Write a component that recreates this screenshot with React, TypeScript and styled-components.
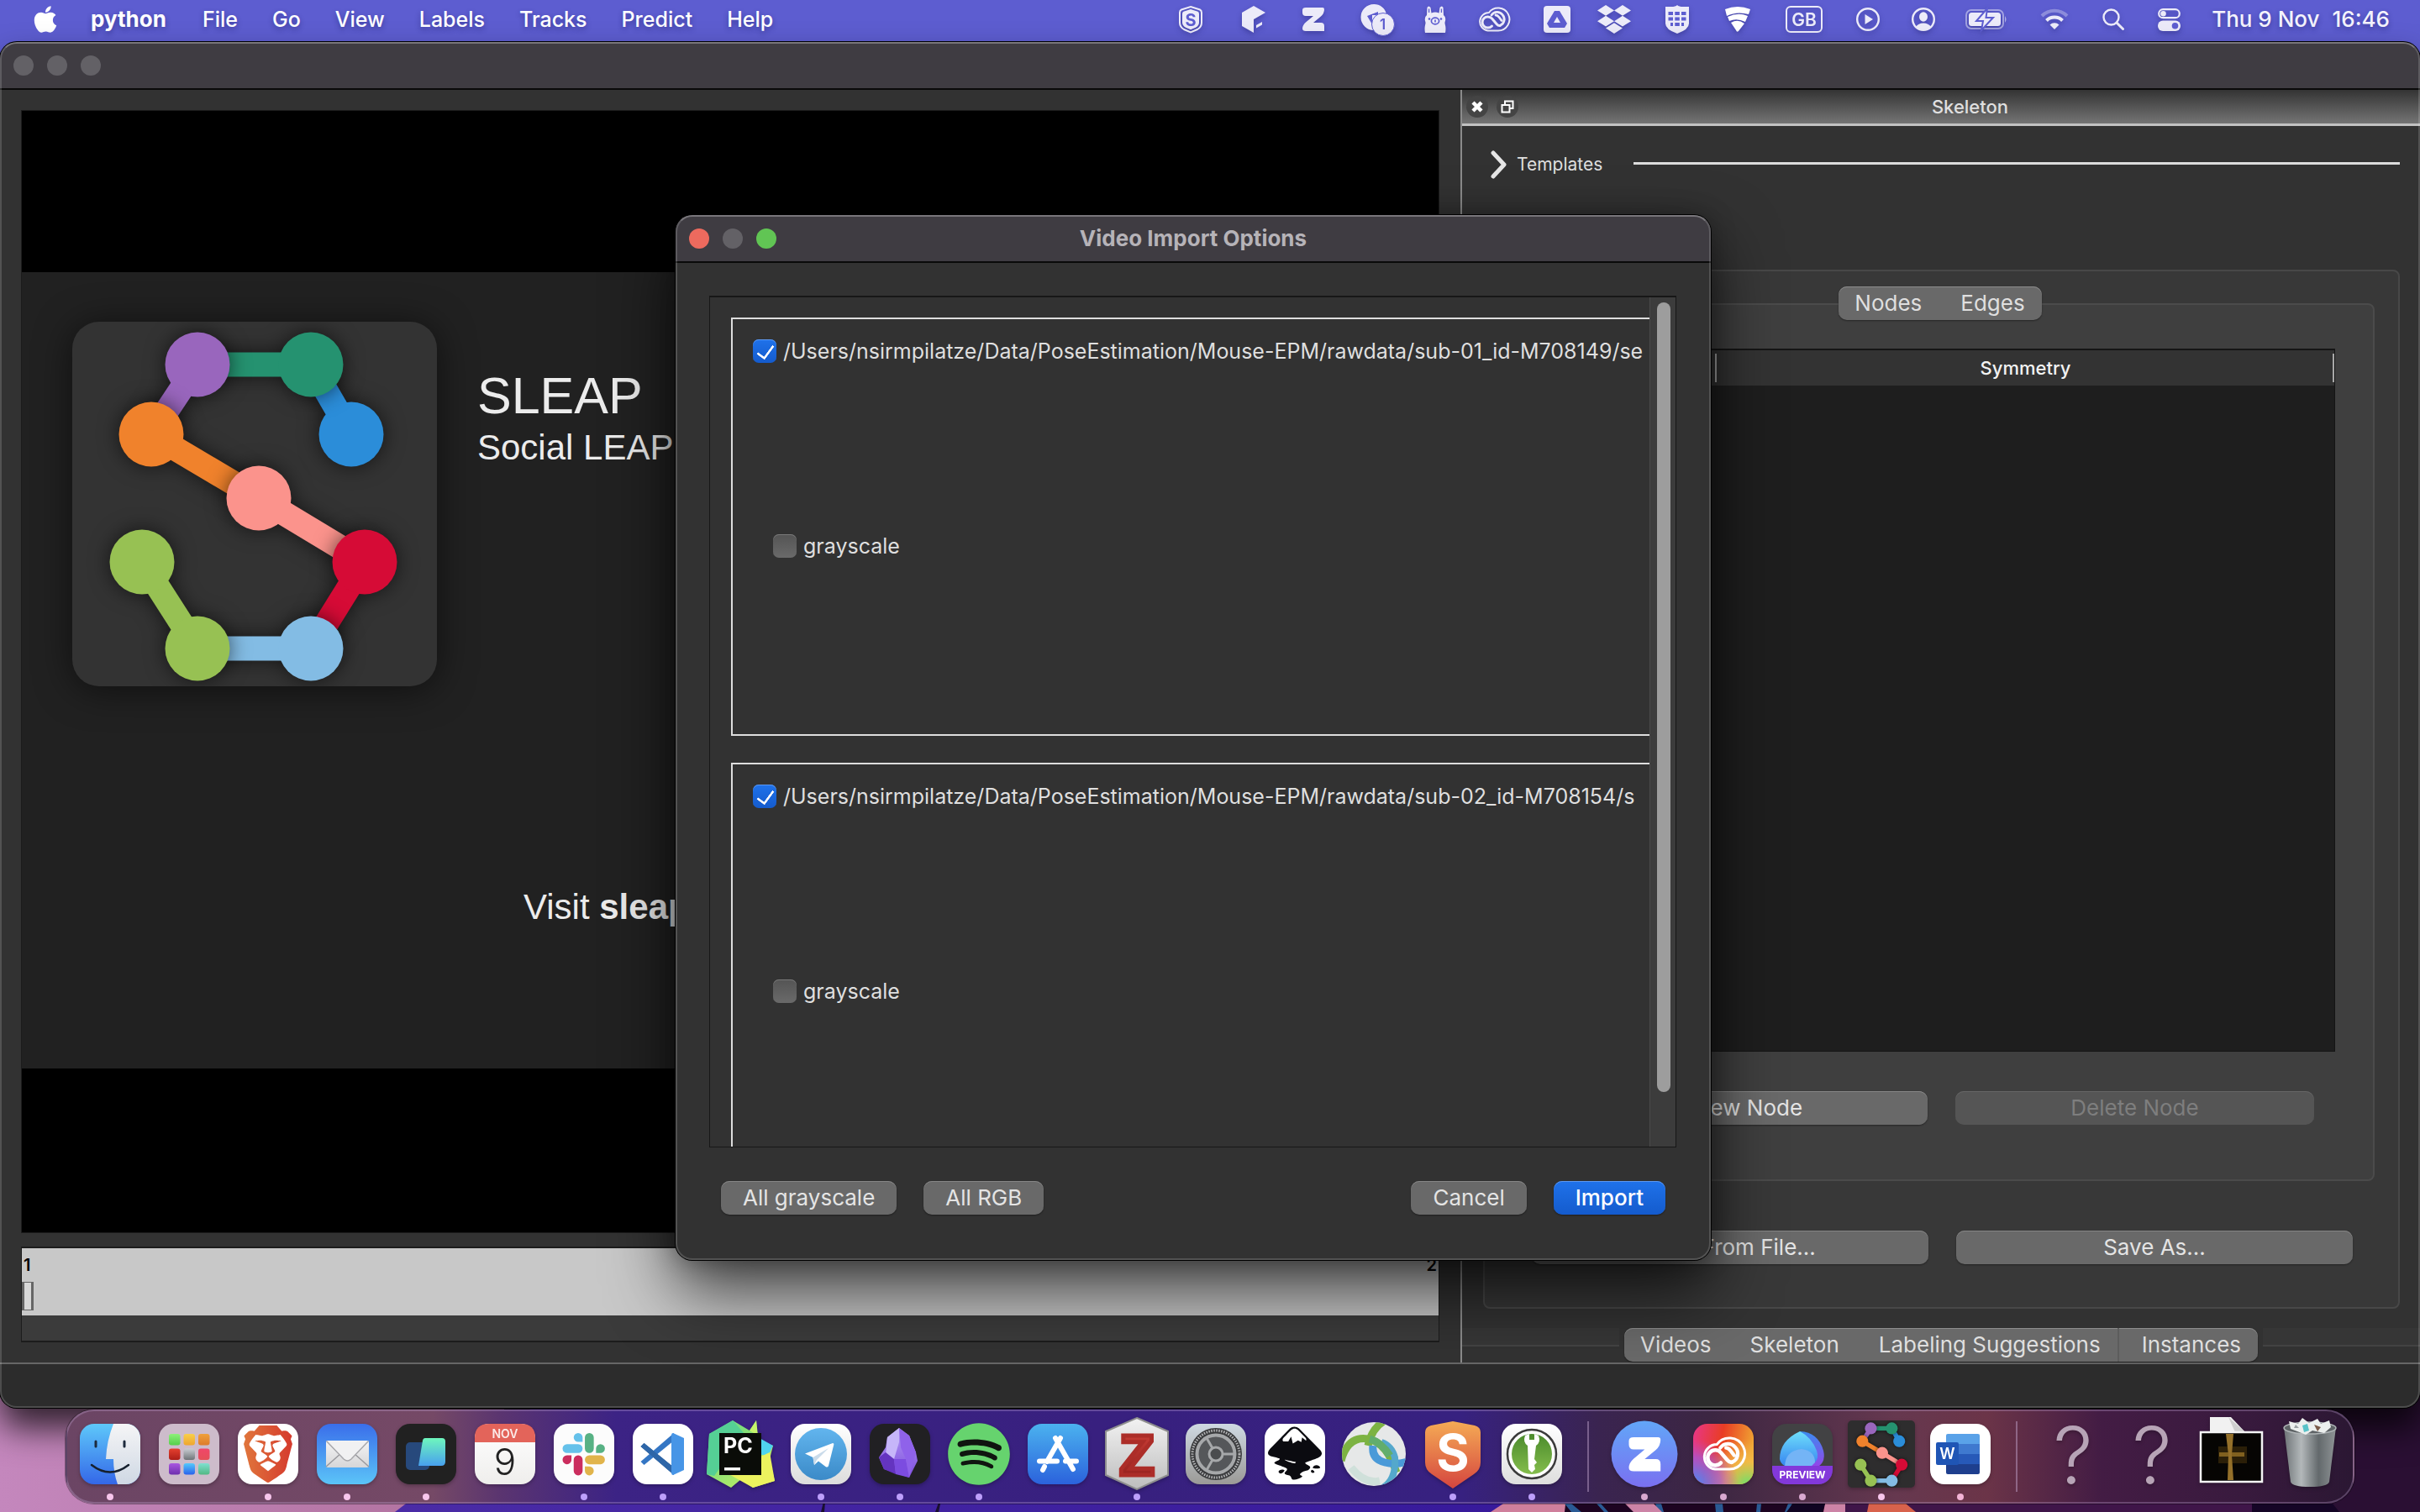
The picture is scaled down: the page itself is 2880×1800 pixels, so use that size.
import React from "react";
import styled, { createGlobalStyle, css } from "styled-components";
import { FaApple, FaDropbox, FaSpotify } from "react-icons/fa";
import { SiBrave, SiInkscape } from "react-icons/si";

const UI = `Inter, "Liberation Sans", sans-serif`;
const HELV = `"Liberation Sans", Arial, sans-serif`;

const GlobalStyle = createGlobalStyle`
  * { box-sizing: border-box; }
  html, body { margin: 0; height: 100%; }
  body { font-family: ${UI}; font-size: 25px; line-height: 32px; color: #dfdfdf; background: #5d5dd0; overflow: hidden; }
  button, input { font: inherit; color: inherit; margin: 0; }
  button { border: 0; padding: 0; background: none; }
`;

/* ---------- Desktop ---------- */

const Desktop = styled.div`
  position: relative;
  display: flex;
  flex-direction: column;
  height: 100vh;
  overflow: hidden;
  isolation: isolate;
`;

const WallpaperSvg = styled.svg`
  position: absolute;
  left: 0;
  bottom: 0;
  width: 100%;
  height: 160px;
  z-index: -1;
`;

const Wallpaper = () => (
  <WallpaperSvg viewBox="0 0 2880 160" preserveAspectRatio="none" aria-hidden="true">
    <defs>
      <linearGradient id="wpPink" x1="0" y1="0" x2="1" y2="0">
        <stop offset="0" stopColor="#c487bd" />
        <stop offset="1" stopColor="#b0709c" />
      </linearGradient>
      <linearGradient id="wpBlue" x1="0" y1="0" x2="1" y2="0">
        <stop offset="0" stopColor="#4a2ba6" />
        <stop offset="1" stopColor="#36189a" />
      </linearGradient>
    </defs>
    <rect width="2880" height="160" fill="#2a0f33" />
    <rect width="600" height="160" fill="url(#wpPink)" />
    <path d="M470 160 L680 0 H1880 V160Z" fill="url(#wpBlue)" />
    <path d="M977 160 l3-12 h2 l-1 12z M1113 160 l5-14 h2 l-3 14z" fill="#1a1030" />
    <path d="M1774 160 L1850 110 L1870 160Z" fill="#cf7f9c" />
    <path d="M1880 0 H2200 V160 H1862Z" fill="#1d0421" />
    <path d="M1862 150 l8 0 l12 10 h-12z M1900 150 h5 l9 10 h-5z M1970 150 h7 l3 10 h-7z M2041 150 h9 l1 10 h-9z M2091 150 h5 l-1 10 h-5z M2128 150 h5 l-6 10 h-3z" fill="#2a5a94" />
    <path d="M1934 150 h34 l10 10 h-34z M2172 150 h32 l-8 10 h-26z" fill="#cc83a6" />
    <path d="M2134 150 h38 l-4 10 h-42z" fill="#100422" />
    <rect x="2196" y="0" width="500" height="160" fill="#3f1549" />
    <path d="M2224 150 h44 l12 10 h-58z" fill="#d8624c" />
    <path d="M2680 150 h96 l8 10 h-104z" fill="#150526" />
  </WallpaperSvg>
);

/* ---------- Menu bar ---------- */

const MenuBar = styled.header`
  display: flex;
  align-items: center;
  justify-content: space-between;
  height: 50px;
  flex: none;
  padding: 0 36px 4px;
  color: #f4f3fc;
  text-shadow: 0 3px 6px rgba(20, 20, 90, 0.45);
`;

const Menus = styled.nav`
  display: flex;
  align-items: center;
  gap: 41px;
`;

const AppleButton = styled.button`
  display: flex;
  margin-right: -5px;
  color: #fff;
`;

const MenuButton = styled.button<{ $bold?: boolean }>`
  color: #fff;
  text-shadow: inherit;
  font-size: ${(p) => (p.$bold ? 26 : 25)}px;
  font-weight: ${(p) => (p.$bold ? 700 : 500)};
  padding-right: ${(p) => (p.$bold ? 2 : 0)}px;
`;

const StatusItems = styled.div`
  display: flex;
  align-items: center;
`;

const StatusButton = styled.button<{ $w: number }>`
  display: flex;
  align-items: center;
  justify-content: center;
  width: ${(p) => p.$w}px;
  height: 40px;
  svg { filter: drop-shadow(0 3px 3px rgba(20, 20, 90, 0.35)); overflow: visible; }
`;

const Clock = styled.time`
  display: flex;
  gap: 15px;
  padding-left: 14px;
  font-size: 26px;
  font-weight: 500;
`;

const W = "#ecebf9";
const B = "#5d5dd0";

const CloudLoops = ({ color, stroke }: { color: string; stroke: number }) => (
  <g fill="none" stroke={color} strokeWidth={stroke} strokeLinecap="round">
    <path d="M12.500 28.500 H25 A13.500 13.500 0 1 0 14 7 A10.800 10.800 0 0 0 12.500 28.500Z" />
    <path d="M17.500 23 A6.600 6.600 0 1 1 17.500 14 L23 20.500 Q25 22.800 27 22.500" strokeWidth={stroke * 1.5} />
    <path d="M17 10 A8 8 0 0 1 30 9.500 A8 8 0 0 1 27 22.500 M22 10 Q24 10 26 12.500 L29 16.500" strokeWidth={stroke * 1.4} />
  </g>
);

const ZoomMark = ({ color }: { color: string }) => (
  <path
    fill={color}
    d="M4 0 H24 Q26 0 26 2 Q26 7 22 10.500 L13 18 H22 Q26 18 26 22 V28 H4 Q0 28 0 25 Q0 21 4 17.500 L13 10 H4 Q0 10 0 6 V3 Q0 0 4 0Z"
  />
);

const statusIcons: { name: string; w: number; art: React.ReactNode }[] = [
  {
    name: "Surfshark", w: 74,
    art: (
      <svg width="28" height="32" viewBox="0 0 28 32">
        <path d="M14 1 L25 4.500 Q27 5.500 27 8 V20 Q27 25 22 28 L14 31.500 L6 28 Q1 25 1 20 V8 Q1 5.500 3 4.500Z" fill="none" stroke={W} strokeWidth="2" />
        <path d="M14 4 L22.500 6.800 Q24 7.500 24 9.500 V19.500 Q24 23.500 20 25.800 L14 28.300 L8 25.800 Q4 23.500 4 19.500 V9.500 Q4 7.500 5.500 6.800Z" fill={W} />
        <text x="14" y="23.500" textAnchor="middle" fontFamily={UI} fontWeight="700" fontSize="20" fill={B}>S</text>
      </svg>
    ),
  },
  {
    name: "Cube", w: 76,
    art: (
      <svg width="28" height="32" viewBox="0 0 28 32">
        <path d="M14 0 L28 8 L14 16 V32 L0 24 V8Z M17 23 L24 19 V22.500 L17 26.500Z" fill={W} />
      </svg>
    ),
  },
  { name: "Zoom", w: 66, art: <svg width="26" height="28" viewBox="0 0 26 28"><ZoomMark color={W} /></svg> },
  {
    name: "Notifications", w: 86,
    art: (
      <svg width="40" height="36" viewBox="0 0 40 36">
        <path d="M16 0 A15 15 0 1 0 16 31 A15 15 0 0 0 31 12 A15 15 0 0 0 16 0Z" fill={W} />
        <path d="M8 14 L21 9 V13 L14 13 V24Z" fill={B} />
        <circle cx="27" cy="24" r="13.500" fill={W} stroke={B} strokeWidth="1" />
        <text x="26.500" y="30" textAnchor="middle" fontFamily={UI} fontWeight="600" fontSize="17" fill={B}>1</text>
      </svg>
    ),
  },
  {
    name: "Ollama", w: 52,
    art: (
      <svg width="26" height="32" viewBox="0 0 26 32">
        <path d="M3 11 L3.500 2 Q5 -1 7.500 2 L8.500 8.500 Q13 6.500 17.500 8.500 L18.500 2 Q21 -1 22.500 2 L23 11 Q26 13 25 18 Q24 20 25 23 Q26 27 25 32 H1 Q0 27 1 23 Q2 20 1 18 Q0 13 3 11Z" fill={W} />
        <path d="M5.600 3.500 v4.500 M20.400 3.500 v4.500" stroke={B} strokeWidth="1.300" />
        <ellipse cx="13" cy="18" rx="4.600" ry="3.800" fill="none" stroke={B} strokeWidth="1.700" />
        <circle cx="6" cy="15.500" r="1.300" fill={B} /><circle cx="20" cy="15.500" r="1.300" fill={B} />
        <path d="M13 16.500 v3" stroke={B} strokeWidth="1.600" />
      </svg>
    ),
  },
  { name: "Creative Cloud", w: 88, art: <svg width="40" height="30" viewBox="0 0 40 30"><CloudLoops color={W} stroke={2} /></svg> },
  {
    name: "Adguard", w: 62,
    art: (
      <svg width="32" height="32" viewBox="0 0 32 32">
        <rect width="32" height="32" rx="4" fill={W} />
        <path d="M13 6 H19 L28 21 L25 26 H7 L4 21Z" fill={B} />
        <path d="M16 13 L20 20 H12Z" fill={W} />
      </svg>
    ),
  },
  { name: "Dropbox", w: 74, art: <FaDropbox size={40} color={W} /> },
  {
    name: "Firewall", w: 76,
    art: (
      <svg width="30" height="34" viewBox="0 0 30 34">
        <path d="M1 2 H8 Q13 2 15 0 Q17 2 22 2 H29 V22 Q29 29 15 34 Q1 29 1 22Z" fill={W} />
        <path d="M4.500 8 h5.500 v4 h-5.500z M12.300 8 h5.500 v4 h-5.500z M20 8 h5.500 v4 h-5.500z M4.500 14.500 h5.500 v4 h-5.500z M12.300 14.500 h5.500 v4 h-5.500z M20 14.500 h5.500 v4 h-5.500z M7 21 h3 v4 h-3z M12.300 21 h5.500 v4 h-5.500z M20 21 h3 v4 h-3z" fill={B} />
      </svg>
    ),
  },
  {
    name: "FortiClient", w: 68,
    art: (
      <svg width="30" height="30" viewBox="0 0 30 30">
        <path d="M0 3 Q15 -3 30 3 L28 9 Q14 5 2 11Z M3 12 Q16 6 27 11 L24 18 Q14 13 5 17Z M7 19 Q15 14 23 20 L16 29 Q14 31 13 28Z" fill="#fff" />
      </svg>
    ),
  },
  {
    name: "Input source", w: 90,
    art: (
      <svg width="44" height="32" viewBox="0 0 44 32">
        <rect x="1" y="1" width="42" height="30" rx="5" fill="none" stroke={W} strokeWidth="2" />
        <text x="22" y="23.500" textAnchor="middle" fontFamily={UI} fontWeight="600" fontSize="21" fill={W}>GB</text>
      </svg>
    ),
  },
  {
    name: "Now playing", w: 62,
    art: (
      <svg width="28" height="28" viewBox="0 0 28 28">
        <circle cx="14" cy="14" r="12.800" fill="none" stroke={W} strokeWidth="2.400" />
        <path d="M10.500 8 L20 14 L10.500 20Z" fill={W} strokeLinejoin="round" />
      </svg>
    ),
  },
  {
    name: "User", w: 70,
    art: (
      <svg width="28" height="28" viewBox="0 0 28 28">
        <circle cx="14" cy="14" r="12.800" fill="none" stroke={W} strokeWidth="2.400" />
        <ellipse cx="14" cy="11" rx="5" ry="5.800" fill={W} />
        <path d="M5 23 Q8 18.500 14 18.500 Q20 18.500 23 23 Q19 27 14 27 Q9 27 5 23Z" fill={W} />
      </svg>
    ),
  },
  {
    name: "Battery", w: 80,
    art: (
      <svg width="50" height="26" viewBox="0 0 50 26">
        <rect x="1" y="2" width="44" height="22" rx="6" fill="none" stroke={W} strokeOpacity="0.500" strokeWidth="2" />
        <rect x="4" y="5" width="38" height="16" rx="3.500" fill={W} />
        <path d="M47 9 Q50 13 47 17Z" fill={W} fillOpacity="0.600" />
        <path d="M26 0 L13 15 H21 L19 26 L33 11 H24.500Z" fill={W} stroke={B} strokeWidth="2" />
      </svg>
    ),
  },
  {
    name: "Wi-Fi", w: 82,
    art: (
      <svg width="34" height="26" viewBox="0 0 34 26">
        <g fill="none" stroke={W} strokeWidth="4">
          <path d="M2 9 A21 21 0 0 1 32 9" strokeOpacity="0.350" />
          <path d="M7.500 14.500 A13.500 13.500 0 0 1 26.500 14.500" />
        </g>
        <path d="M17 25 L11.500 19.500 A8 8 0 0 1 22.500 19.500Z" fill={W} />
      </svg>
    ),
  },
  {
    name: "Spotlight", w: 58,
    art: (
      <svg width="26" height="26" viewBox="0 0 26 26">
        <circle cx="10.500" cy="10.500" r="9" fill="none" stroke={W} strokeWidth="2.400" />
        <path d="M17 17 L24.500 24.500" stroke={W} strokeWidth="3" strokeLinecap="round" />
      </svg>
    ),
  },
  {
    name: "Control Centre", w: 74,
    art: (
      <svg width="27" height="27" viewBox="0 0 27 27">
        <rect x="1.200" y="1.200" width="24.600" height="10" rx="5" fill="none" stroke={W} strokeWidth="2.200" />
        <circle cx="6.500" cy="6.200" r="3.300" fill={W} />
        <rect x="0" y="14.500" width="27" height="12.500" rx="6" fill={W} />
        <circle cx="20.500" cy="20.700" r="3.800" fill={B} />
      </svg>
    ),
  },
];

/* ---------- Window chrome ---------- */

const frame = css`
  border-radius: 20px;
  overflow: hidden;
  background: #323232;
  &::after {
    content: "";
    position: absolute;
    inset: 0;
    border-radius: 20px;
    border: 2px solid rgba(255, 255, 255, 0.16);
    border-top-color: rgba(255, 255, 255, 0.3);
    pointer-events: none;
  }
`;

const MainWindow = styled.main`
  ${frame}
  position: relative;
  display: flex;
  flex-direction: column;
  flex: 1;
  min-height: 0;
  box-shadow: 0 0 0 1px #000, 0 24px 40px rgba(0, 0, 0, 0.75);
`;

const TitleBar = styled.div`
  display: grid;
  grid-template-columns: 1fr auto 1fr;
  align-items: center;
  height: 57px;
  flex: none;
  padding: 0 16px;
  background: #3f3c42;
  border-bottom: 2px solid #0a0a0a;
  h1 { margin: 0; font-size: 26px; line-height: 32px; font-weight: 700; color: #b6b3b8; }
`;

const Lights = styled.div`
  display: flex;
  gap: 16px;
`;

const Light = styled.button<{ $color: string }>`
  width: 24px;
  height: 24px;
  border-radius: 50%;
  background: ${(p) => p.$color};
`;

const WindowBody = styled.div`
  display: grid;
  grid-template-columns: minmax(0, 1738fr) minmax(0, 1142fr);
  flex: 1;
  min-height: 0;
`;

const StatusBar = styled.footer`
  height: 54px;
  flex: none;
  border-top: 2px solid #666;
  background: #2c2c2c;
`;

/* ---------- Video side ---------- */

const VideoSide = styled.section`
  display: flex;
  flex-direction: column;
  gap: 16px;
  padding: 24px 25px;
  min-height: 0;
`;

const VideoView = styled.div`
  display: flex;
  flex-direction: column;
  justify-content: center;
  flex: 1;
  min-height: 0;
  padding-bottom: 3px;
  background: #000;
  border: 1px solid #1c1c1c;
`;

const Splash = styled.div`
  aspect-ratio: 16 / 9;
  padding: 59px 60px;
  background: #212121;
  font-family: ${HELV};
  color: #ececec;
  white-space: nowrap;
  overflow: hidden;
`;

const SplashTop = styled.div`
  display: flex;
  gap: 48px;
`;

const LogoCard = styled.div`
  width: 434px;
  height: 434px;
  border-radius: 32px;
  background: #333;
  box-shadow: 0 4px 44px rgba(0, 0, 0, 0.55);
`;

const SplashText = styled.div`
  padding-top: 56px;
  h2 { margin: 0 0 6px; font-size: 61px; line-height: 64px; font-weight: 400; }
  p { margin: 0; font-size: 42px; line-height: 48px; }
`;

const Visit = styled.p`
  margin: 239px 0 0;
  padding-left: 537px;
  font-size: 42px;
  line-height: 48px;
`;

type Pt = [number, number];
const chain: { color: string; node: Pt; to: Pt; end?: Pt }[] = [
  { color: "#2b8dd9", node: [332, 134], to: [284, 51] },
  { color: "#259270", node: [284, 51], to: [149, 51] },
  { color: "#9966bd", node: [149, 51], to: [94, 134] },
  { color: "#f0822c", node: [94, 134], to: [222, 210] },
  { color: "#fb938c", node: [222, 210], to: [348, 286] },
  { color: "#d60b36", node: [348, 286], to: [284, 389] },
  { color: "#83bce4", node: [284, 389], to: [149, 389] },
  { color: "#97c153", node: [149, 389], to: [83, 286], end: [83, 286] },
];

const Link = styled.g`
  filter: drop-shadow(0 0 12px rgba(0, 0, 0, 0.6));
`;

const SleapMark = (props: React.SVGProps<SVGSVGElement>) => (
  <svg viewBox="0 0 434 434" {...props}>
    {chain.map((c) => (
      <Link key={c.color}>
        <path d={`M${c.node} L${c.to}`} stroke={c.color} strokeWidth="29" />
        <circle cx={c.node[0]} cy={c.node[1]} r="38.500" fill={c.color} />
        {c.end && <circle cx={c.end[0]} cy={c.end[1]} r="38.500" fill={c.color} />}
      </Link>
    ))}
  </svg>
);

const Timeline = styled.div`
  flex: none;
  height: 114px;
  border: 1px solid #1c1c1c;
  border-top-width: 2px;
  border-bottom-width: 2px;
  background: #3b3b3b;
`;

const Track = styled.div`
  display: flex;
  flex-direction: column;
  gap: 8px;
  height: 80px;
  padding-top: 8px;
  background: #c8c8c8;
  color: #000;
`;

const FrameNumbers = styled.div`
  display: flex;
  justify-content: space-between;
  padding: 0 2px;
  font-size: 20px;
  line-height: 24px;
  font-weight: 600;
`;

const FrameSlider = styled.input`
  appearance: none;
  display: block;
  width: 100%;
  height: 34px;
  background: transparent;
  &::-webkit-slider-thumb {
    appearance: none;
    width: 14px;
    height: 34px;
    border: 3px solid #666;
    border-top-width: 1px;
    border-bottom-width: 1px;
    background: #d8d8d8;
  }
`;

/* ---------- Skeleton panel ---------- */

const Panel = styled.aside`
  display: flex;
  flex-direction: column;
  min-height: 0;
  border-left: 2px solid #8b8b8b;
`;

const PanelHeader = styled.div`
  display: grid;
  grid-template-columns: 70px 1fr;
  align-items: center;
  flex: none;
  height: 43px;
  padding-left: 5px;
  border-bottom: 3px solid #c2c2c2;
  background: linear-gradient(#343434, #747474);
  h2 { margin: 0 0 0 -6px; font-size: 22px; line-height: 28px; font-weight: 500; text-align: center; }
`;

const HeaderButtons = styled.div`
  display: flex;
  gap: 10px;
`;

const RoundButton = styled.button`
  display: flex;
  align-items: center;
  justify-content: center;
  width: 26px;
  height: 26px;
  border-radius: 50%;
  background: #444;
`;

const PanelContent = styled.div`
  display: flex;
  flex-direction: column;
  flex: 1;
  min-height: 0;
  padding: 29px 24px 23px 25px;
`;

const Templates = styled.div`
  display: flex;
  align-items: center;
  flex: none;
  margin-bottom: 108px;
  hr { flex: 1; height: 3px; margin: 0 0 4px; border: 0; background: #dcdcdc; }
`;

const Disclosure = styled.button`
  display: flex;
  align-items: center;
  gap: 11px;
  width: 179px;
  padding-left: 9px;
  font-size: 21px;
  line-height: 34px;
`;

const OuterGroup = styled.div`
  display: flex;
  flex-direction: column;
  flex: 1;
  min-height: 0;
  padding: 18px 28px 51px 25px;
  border: 2px solid #484848;
  border-radius: 8px;
  background: #383838;
`;

const Segments = styled.div`
  position: relative;
  display: flex;
  flex: none;
  height: 40px;
  border-radius: 10px;
  background: #696969;
  box-shadow: inset 0 1px 0 #8d8d8d, 0 1px 2px rgba(0, 0, 0, 0.4);
  font-size: 26px;
`;

const NodeSegments = styled(Segments)`
  align-self: center;
  margin-bottom: -20px;
  z-index: 1;
`;

const Segment = styled.button<{ $divided?: boolean }>`
  padding: 0 19px;
  & + & { padding: 0 20px 0 27px; }
  border-left: ${(p) => (p.$divided ? "2px solid #5c5c5c" : "0")};
`;

const InnerGroup = styled.div`
  display: flex;
  flex-direction: column;
  flex: 1;
  min-height: 0;
  padding: 52px 45px 65px;
  border: 2px solid #4b4b4b;
  border-radius: 8px;
  background: #3f3f3f;
`;

const TableFrame = styled.div`
  flex: 1;
  min-height: 0;
  border: 1px solid #151515;
  border-top-width: 2px;
  background: #1e1e1e;
`;

const NodeTable = styled.table`
  width: 100%;
  border-collapse: collapse;
  th {
    position: relative;
    height: 42px;
    padding: 0;
    background: #333;
    font-size: 22px;
    line-height: 28px;
    font-weight: 500;
    color: #f2f2f2;
  }
  th:first-child { width: 203px; }
  th::after {
    content: "";
    position: absolute;
    right: 0;
    top: 4px;
    bottom: 4px;
    width: 2px;
    background: #a8a8a8;
  }
`;

const ButtonRow = styled.div<{ $top: number; $left: number; $right: number }>`
  display: flex;
  gap: 33px;
  flex: none;
  padding: ${(p) => `${p.$top}px ${p.$right}px 0 ${p.$left}px`};
  button { flex: 1; }
`;

const PushButton = styled.button<{ $primary?: boolean }>`
  height: 40px;
  padding: 0 26px;
  border-radius: 10px;
  background: ${(p) => (p.$primary ? "linear-gradient(#1f72ea, #145bcd)" : "#696969")};
  color: ${(p) => (p.$primary ? "#fff" : "#e4e4e4")};
  box-shadow: inset 0 1px 0 ${(p) => (p.$primary ? "#5d98f0" : "#868686")}, 0 1px 2px rgba(0, 0, 0, 0.4);
  font-size: 26px;
  font-weight: ${(p) => (p.$primary ? 500 : 400)};
  &:disabled { background: #555; color: #7e7e7e; box-shadow: inset 0 1px 0 #666; }
`;

const BottomTabs = styled.div`
  display: flex;
  gap: 6px;
  flex: none;
  height: 41px;
`;

const TabEdge = styled.div`
  flex: 1;
  height: 22px;
  background: #363636;
  border-bottom: 2px solid #434343;
`;

/* ---------- Import dialog ---------- */

const Dialog = styled.section`
  ${frame}
  position: absolute;
  left: 804px;
  top: 256px;
  width: 1232px;
  z-index: 5;
  overflow: visible;
  box-shadow: 0 0 0 1px #000, 0 36px 80px rgba(0, 0, 0, 0.7), 0 0 30px rgba(0, 0, 0, 0.3);
  ${TitleBar} { border-radius: 20px 20px 0 0; }
`;

const DialogBody = styled.div`
  padding: 39px 41px 54px 40px;
`;

const ScrollArea = styled.div`
  display: flex;
  height: 1014px;
  border: 1px solid #171717;
  border-top-width: 2px;
`;

const ScrollContent = styled.div`
  flex: 1;
  min-width: 0;
  padding: 24px 0 0 25px;
  overflow: hidden;
`;

const ScrollTrack = styled.div`
  width: 31px;
  padding: 6px 6px 6px 8px;
  background: #3c3c3c;
  border-left: 1px solid #4a4a4a;
`;

const ScrollThumb = styled.div`
  height: 940px;
  border-radius: 8px;
  background: #9d9d9d;
`;

const VideoGroup = styled.fieldset`
  display: flex;
  flex-direction: column;
  width: calc(100% + 60px);
  min-width: 0;
  height: 498px;
  margin: 0 0 32px;
  padding: 24px 24px 6px;
  border: 2px solid #dedede;
`;

const CheckLabel = styled.label`
  display: flex;
  align-items: center;
  gap: 8px;
  height: 28px;
  white-space: nowrap;
`;

const GrayRow = styled.div`
  display: flex;
  align-items: center;
  flex: 1;
  padding-left: 24px;
`;

const Check = styled.input`
  appearance: none;
  position: relative;
  flex: none;
  width: 28px;
  height: 28px;
  border-radius: 7px;
  background: linear-gradient(#545454, #6a6a6a);
  box-shadow: inset 0 1px 0 #7a7a7a;
  &:checked { background: linear-gradient(#1f72ea, #145bcd); box-shadow: inset 0 1px 0 #5d98f0; }
  &:checked::after {
    content: "";
    position: absolute;
    left: 9px;
    top: 3px;
    width: 9px;
    height: 17px;
    border: solid #fff;
    border-width: 0 3px 3px 0;
    border-radius: 1px;
    transform: rotate(36deg);
  }
`;

const DialogButtons = styled.div`
  display: flex;
  gap: 32px;
  padding: 40px 13px 0 14px;
  & > :nth-child(3) { margin-left: auto; }
`;

/* ---------- Dock ---------- */

const DockArea = styled.div`
  position: relative;
  display: flex;
  justify-content: center;
  flex: none;
  padding: 2px 0 10px;
`;

const DockShelf = styled.nav`
  display: flex;
  height: 112px;
  padding: 7px 4px 0;
  border: 2px solid rgba(200, 170, 220, 0.3);
  border-radius: 34px;
  background: linear-gradient(90deg, #6b4564 0%, #754966 16%, #5a3470 19%, #3c2385 24%, #38207f 45%, #372180 61%, #3a2450 67%, #3c2642 72%, #66384f 80%, #6b3448 84%, #431c44 89%, #391a3e 95%, #2b1733 100%);
  box-shadow: 0 0 0 1px rgba(0, 0, 0, 0.35);
`;

const DockButton = styled.button<{ $dot?: string }>`
  display: flex;
  flex-direction: column;
  align-items: center;
  gap: 3px;
  width: 94px;
  &::after {
    content: "";
    width: 8px;
    height: 8px;
    border-radius: 50%;
    background: ${(p) => p.$dot ?? "transparent"};
  }
  & > svg { display: block; overflow: visible; filter: drop-shadow(0 2px 2px rgba(0, 0, 0, 0.25)); }
`;

const DockRule = styled.span`
  width: 2px;
  height: 84px;
  margin: 5px 19px 0 19px;
  background: rgba(200, 170, 210, 0.45);
`;

const Tile = ({ fill }: { fill: string }) => <rect x="11" y="8" width="72" height="72" rx="17" fill={fill} />;

const Grad = ({ id, stops, x2 = 0, y2 = 1 }: { id: string; stops: string[]; x2?: number; y2?: number }) => (
  <linearGradient id={id} x1="0" y1="0" x2={x2} y2={y2}>
    {stops.map((s, i) => <stop key={i} offset={i / (stops.length - 1)} stopColor={s} />)}
  </linearGradient>
);

const padColors = [
  ["#8df07a", "#56cf4b"], ["#f8cf4a", "#efa52f"], ["#efa03a", "#dd7c2c"],
  ["#e5402f", "#ad1e18"], ["#c9cdd2", "#6f7478"], ["#f0476a", "#e55058"],
  ["#a957e0", "#6e2fae"], ["#55c9fb", "#2a62ec"], ["#7fe0d0", "#52b884"],
];

type DockItem = { name: string; dot?: string; art: React.ReactNode };
const PINK = "#f7c6ec";
const LILAC = "#bd9ffb";
const ROSE = "#d9a8d0";

const apps: DockItem[] = [
  {
    name: "Finder", dot: PINK,
    art: (
      <>
        <defs><Grad id="fA" stops={["#5ec8fa", "#3467e8"]} /><Grad id="fB" stops={["#f5f5f6", "#cfd8e4"]} /><clipPath id="fC"><rect x="11" y="8" width="72" height="72" rx="17" /></clipPath></defs>
        <g clipPath="url(#fC)">
          <rect x="11" y="8" width="72" height="72" fill="url(#fA)" />
          <path d="M51 8 Q43 28 42 50 H51 Q51 66 56 80 H83 V8Z" fill="url(#fB)" />
        </g>
        <path d="M30 29 v6 M64 29 v6" stroke="#1d2a3c" strokeWidth="3" strokeLinecap="round" />
        <path d="M25 57 Q47 74 69 57" fill="none" stroke="#16202e" strokeWidth="2.500" strokeLinecap="round" />
      </>
    ),
  },
  {
    name: "Launchpad",
    art: (
      <>
        <defs>{padColors.map((c, i) => <Grad key={i} id={`lp${i}`} stops={c} />)}</defs>
        <Tile fill="#cdbccb" />
        {padColors.map((_, i) => (
          <rect key={i} x={23 + (i % 3) * 17.500} y={20 + Math.floor(i / 3) * 17.500} width="13.500" height="13.500" rx="3" fill={`url(#lp${i})`} />
        ))}
      </>
    ),
  },
  {
    name: "Brave", dot: PINK,
    art: (
      <>
        <defs><Grad id="brG" stops={["#e0763c", "#d53a2d"]} x2={1} y2={0} /></defs>
        <Tile fill="#fff" />
        <SiBrave x="13" y="10" size={68} style={{ fill: "url(#brG)" }} />
      </>
    ),
  },
  {
    name: "Mail", dot: PINK,
    art: (
      <>
        <defs><Grad id="mA" stops={["#3a6eea", "#5bc4f8"]} /><Grad id="mB" stops={["#f4f4f4", "#d6d6d8"]} /></defs>
        <Tile fill="url(#mA)" />
        <rect x="22" y="28" width="51" height="32" rx="2" fill="url(#mB)" />
        <path d="M22 59 L40 43 M73 59 L55 43" stroke="#9a9a9e" strokeWidth="1.500" />
        <path d="M22.500 28.500 L43 50 Q47.500 54 52 50 L72.500 28.500" fill="#f1f1f2" stroke="#a8a8ac" strokeWidth="1.500" />
      </>
    ),
  },
  {
    name: "Warp", dot: PINK,
    art: (
      <>
        <defs><Grad id="wA" stops={["#6ef7bd", "#48a0ee"]} /></defs>
        <Tile fill="#212121" />
        <rect x="23" y="30" width="28" height="33" rx="5" fill="#27497c" />
        <path d="M46 25 H66 Q70 25 70 29 V53 Q70 58 65 58 H38 L43 28 Q43.500 25 46 25Z" fill="url(#wA)" />
      </>
    ),
  },
  {
    name: "Calendar",
    art: (
      <>
        <defs><Grad id="cA" stops={["#fff", "#efeeec"]} /></defs>
        <Tile fill="url(#cA)" />
        <path d="M11 30 V25 Q11 8 28 8 H66 Q83 8 83 25 V30Z" fill="#e3645a" />
        <text x="47" y="24.500" textAnchor="middle" fontFamily={UI} fontWeight="600" fontSize="14" fill="#fbe9e7">NOV</text>
        <text x="47" y="69" textAnchor="middle" fontFamily={UI} fontWeight="300" fontSize="44" fill="#222">9</text>
      </>
    ),
  },
  {
    name: "Slack", dot: LILAC,
    art: (
      <>
        <Tile fill="#fcfcfc" />
        <g transform="translate(21.500 19) scale(2.100)">
          <path fill="#cb2d5e" d="M5.042 15.165a2.528 2.528 0 0 1-2.520 2.523A2.528 2.528 0 0 1 0 15.165a2.527 2.527 0 0 1 2.522-2.520h2.520v2.520zM6.313 15.165a2.527 2.527 0 0 1 2.521-2.520 2.527 2.527 0 0 1 2.521 2.520v6.313A2.528 2.528 0 0 1 8.834 24a2.528 2.528 0 0 1-2.521-2.522v-6.313z" />
          <path fill="#65c1ea" d="M8.834 5.042a2.528 2.528 0 0 1-2.521-2.520A2.528 2.528 0 0 1 8.834 0a2.528 2.528 0 0 1 2.521 2.522v2.520H8.834zM8.834 6.313a2.528 2.528 0 0 1 2.521 2.521 2.528 2.528 0 0 1-2.521 2.521H2.522A2.528 2.528 0 0 1 0 8.834a2.528 2.528 0 0 1 2.522-2.521h6.312z" />
          <path fill="#57b184" d="M18.956 8.834a2.528 2.528 0 0 1 2.522-2.521A2.528 2.528 0 0 1 24 8.834a2.528 2.528 0 0 1-2.522 2.521h-2.522V8.834zM17.688 8.834a2.528 2.528 0 0 1-2.523 2.521 2.527 2.527 0 0 1-2.520-2.521V2.522A2.527 2.527 0 0 1 15.165 0a2.528 2.528 0 0 1 2.523 2.522v6.312z" />
          <path fill="#e1b44b" d="M15.165 18.956a2.528 2.528 0 0 1 2.523 2.522A2.528 2.528 0 0 1 15.165 24a2.527 2.527 0 0 1-2.520-2.522v-2.522h2.520zM15.165 17.688a2.527 2.527 0 0 1-2.520-2.523 2.526 2.526 0 0 1 2.520-2.520h6.313A2.527 2.527 0 0 1 24 15.165a2.528 2.528 0 0 1-2.522 2.523h-6.313z" />
        </g>
      </>
    ),
  },
  {
    name: "Visual Studio Code", dot: LILAC,
    art: (
      <>
        <Tile fill="#fff" />
        <path d="M20.500 35 L24.500 31 L60 60 V69Z" fill="#2a5f9e" />
        <path d="M20.500 53 L24.500 57 L60 28 V19Z" fill="#3476c4" />
        <path d="M20.500 35 L24.500 31 L60 60 L59 68Z" fill="#2e66a8" />
        <path d="M59 19 L72 25 V63 L59 69 Q57 69 57 66 V22 Q57 19 59 19Z" fill="#4795e6" />
      </>
    ),
  },
  {
    name: "PyCharm",
    art: (
      <>
        <defs><Grad id="pA" stops={["#57d58a", "#d4f25a"]} x2={1} /></defs>
        <path d="M8 20 L36 4 L56 16 L64 4 L66 30 L84 34 L80 50 L86 76 L60 84 L46 74 L34 84 L5 68Z" fill="url(#pA)" />
        <path d="M8 20 L36 4 L50 20 L14 70 L5 68Z" fill="#55cf95" />
        <path d="M66 24 L84 34 L78 46 L66 44Z" fill="#4fd4ee" />
        <path d="M28 66 L80 42 L86 76 L60 84Z" fill="#ecf25e" />
        <path d="M56 16 L64 4 L66 22Z" fill="#c5f36a" />
        <rect x="20" y="19" width="50" height="50" fill="#0a0c08" />
        <text x="25" y="43" fontFamily={UI} fontWeight="700" fontSize="25" fill="#fff">PC</text>
        <rect x="26" y="60" width="19" height="3.500" fill="#fff" />
      </>
    ),
  },
  {
    name: "Telegram", dot: LILAC,
    art: (
      <>
        <defs><Grad id="tA" stops={["#62b5ee", "#3b8ac8"]} /><Grad id="tB" stops={["#fff", "#dcdcdc"]} /></defs>
        <Tile fill="url(#tB)" />
        <circle cx="47" cy="44" r="31" fill="url(#tA)" />
        <path d="M28 43.500 L61 31 Q63 31 62 34 L56 58 Q55 60.500 52.500 59 L44 52.500 L39 57 L37.500 48Z" fill="#fff" />
        <path d="M37.500 48 L56 37 L42 51 L39 57Z" fill="#c9dbea" />
      </>
    ),
  },
  {
    name: "Obsidian", dot: LILAC,
    art: (
      <>
        <defs><Grad id="oA" stops={["#b49af5", "#7d4ddd"]} /></defs>
        <Tile fill="#212023" />
        <path d="M46 13 L58 22 L66 42 L68 52 L58 72 L46 68 L28 62 L22 48 L30 36 L32 24Z" fill="url(#oA)" />
        <path d="M46 13 L32 24 L30 45 L40 50 L46 30Z" fill="#c6b6f9" />
        <path d="M22 48 L30 42 L40 50 L42 68 L28 62Z" fill="#6434c0" />
        <path d="M40 50 L54 50 L58 72 L42 68Z" fill="#7c4ce0" />
        <path d="M46 13 L58 22 L66 42 L58 72 L54 50 L48 36Z" fill="#8f62ea" />
      </>
    ),
  },
  {
    name: "Spotify", dot: LILAC,
    art: (
      <>
        <circle cx="47" cy="44" r="34" fill="#101510" />
        <FaSpotify x="9" y="6" size={76} color="#66d36e" />
      </>
    ),
  },
  {
    name: "App Store",
    art: (
      <>
        <defs><Grad id="aA" stops={["#4bb2ef", "#2b62dc"]} /></defs>
        <Tile fill="url(#aA)" />
        <g stroke="#fff" strokeWidth="6" strokeLinecap="round">
          <path d="M50 25 L34 53 M44 25 L65 62 M25 52.500 H46 M56 52.500 H69 M31 59 L29 63" />
        </g>
      </>
    ),
  },
  {
    name: "Zotero", dot: LILAC,
    art: (
      <>
        <defs><Grad id="zA" stops={["#f2f2f2", "#bdbdbd"]} /><Grad id="zB" stops={["#d0423a", "#8d1c1a"]} /></defs>
        <path d="M47 1 L84 17 V69 L47 86 L10 69 V17Z" fill="url(#zA)" stroke="#8e8e8e" strokeWidth="2" />
        <text x="47" y="69" textAnchor="middle" fontFamily={HELV} fontWeight="700" fontSize="68" fill="url(#zB)" stroke="#ac2d28" strokeWidth="5">Z</text>
      </>
    ),
  },
  {
    name: "System Settings",
    art: (
      <>
        <defs><Grad id="sA" stops={["#cfd9e2", "#9b9a97"]} /></defs>
        <Tile fill="url(#sA)" />
        <circle cx="47" cy="44" r="31" fill="#3a3b3d" />
        <circle cx="47" cy="44" r="28" fill="none" stroke="#b5b6b8" strokeWidth="3" strokeDasharray="1.500 1.500" />
        <circle cx="47" cy="44" r="22.500" fill="#55575a" stroke="#a6a8aa" strokeWidth="4" />
        <path d="M47 44 H70 M47 44 L36 25 M47 44 L36 63" stroke="#a6a8aa" strokeWidth="3" />
        <circle cx="47" cy="44" r="8" fill="#4a4c4e" stroke="#a6a8aa" strokeWidth="3" />
      </>
    ),
  },
  {
    name: "Inkscape",
    art: (
      <>
        <Tile fill="#fff" />
        <SiInkscape x="15" y="11" size={64} color="#0b0b10" />
      </>
    ),
  },
  {
    name: "Cytoscape",
    art: (
      <>
        <defs><clipPath id="cyC"><circle cx="47" cy="44" r="38" /></clipPath></defs>
        <circle cx="47" cy="44" r="38" fill="#e6e8e8" />
        <g clipPath="url(#cyC)" fill="none">
          <path d="M20 60 Q36 80 54 76" stroke="#cfe0da" strokeWidth="9" />
          <path d="M8 52 Q16 22 40 26 Q62 30 74 66" stroke="#7cb342" strokeWidth="9" />
          <path d="M40 34 Q44 14 60 4" stroke="#7cb342" strokeWidth="9" />
          <path d="M46 34 Q44 50 60 54 Q74 58 90 52" stroke="#4a9ad8" strokeWidth="9" />
          <path d="M58 84 Q74 74 72 48 Q68 34 56 30" stroke="#54a8cc" strokeWidth="8" />
          <path d="M42 26 Q56 30 66 46" stroke="#62ad6c" strokeWidth="9" />
        </g>
      </>
    ),
  },
  {
    name: "Surfshark", dot: LILAC,
    art: (
      <>
        <defs><Grad id="suA" stops={["#f5ab55", "#d5453f"]} /></defs>
        <path d="M47 5 L73 10 Q80 12 80 18 V54 Q80 63 72 68 L47 85 L22 68 Q14 63 14 54 V18 Q14 12 21 10Z" fill="url(#suA)" />
        <text x="47" y="64" textAnchor="middle" fontFamily={UI} fontWeight="700" fontSize="60" fill="#fff">S</text>
      </>
    ),
  },
  {
    name: "KeePassXC", dot: LILAC,
    art: (
      <>
        <defs><Grad id="kA" stops={["#4b8b2c", "#84bd4c"]} /><Grad id="kB" stops={["#fff", "#dedede"]} /></defs>
        <Tile fill="url(#kB)" />
        <circle cx="47" cy="44" r="29" fill="#fff" stroke="#3b3b3b" strokeWidth="2.500" />
        <circle cx="47" cy="44" r="24" fill="url(#kA)" />
        <path d="M39 22 Q36 30 42 34 L43 62 L47 66 L51 62 L50 57 L53 54 L50 50 L52 34 Q58 30 55 22 L50 20 V27 H44 V20Z" fill="#fff" />
      </>
    ),
  },
];

const recent: DockItem[] = [
  {
    name: "Zoom", dot: ROSE,
    art: (
      <>
        <defs><Grad id="zoA" stops={["#62a6f8", "#7a70f0"]} /></defs>
        <circle cx="47" cy="44" r="39.500" fill="url(#zoA)" />
        <g transform="translate(28.500 24) scale(1.450)"><ZoomMark color="#fff" /></g>
      </>
    ),
  },
  {
    name: "Creative Cloud", dot: ROSE,
    art: (
      <>
        <defs>
          <Grad id="ccA" stops={["#e8368a", "#e93d24", "#f0a032"]} x2={1} y2={0.2} />
          <radialGradient id="ccB" cx="0.900" cy="1" r="0.750"><stop offset="0" stopColor="#6ee06a" /><stop offset="0.500" stopColor="#f2c14a" stopOpacity="0.800" /><stop offset="1" stopColor="#f2c14a" stopOpacity="0" /></radialGradient>
          <radialGradient id="ccC" cx="0" cy="1" r="0.750"><stop offset="0" stopColor="#3f8ef5" /><stop offset="0.600" stopColor="#a05ae0" stopOpacity="0.700" /><stop offset="1" stopColor="#c04ad0" stopOpacity="0" /></radialGradient>
        </defs>
        <Tile fill="url(#ccA)" /><Tile fill="url(#ccB)" /><Tile fill="url(#ccC)" />
        <g transform="translate(20 23) scale(1.370)"><CloudLoops color="#fff" stroke={2.2} /></g>
      </>
    ),
  },
  {
    name: "Preview", dot: ROSE,
    art: (
      <>
        <defs><Grad id="prA" stops={["#6fe0fb", "#3480f0"]} /><Grad id="prB" stops={["#3a8cf0", "#9a40e8"]} /><clipPath id="prC"><rect x="11" y="8" width="72" height="72" rx="17" /></clipPath></defs>
        <Tile fill="#424244" />
        <path d="M44 17 Q66 18 72 40 Q76 56 60 62 L40 60Z" fill="url(#prB)" />
        <path d="M44 17 Q20 28 20 50 Q22 62 44 60 Q70 58 64 40 Q58 24 44 17Z" fill="url(#prA)" />
        <path d="M26 60 Q26 40 46 38 Q62 40 62 54 Q56 62 44 62Z" fill="#74b4f6" />
        <g clipPath="url(#prC)"><rect x="11" y="58" width="72" height="23" fill="#8338da" /></g>
        <text x="47" y="73" textAnchor="middle" fontFamily={UI} fontWeight="700" fontSize="12" fill="#fff">PREVIEW</text>
      </>
    ),
  },
  {
    name: "SLEAP", dot: PINK,
    art: (
      <>
        <rect x="7" y="4" width="80" height="80" rx="5" fill="#2e2d2e" />
        <SleapMark x="7" y="4" width="80" height="80" />
      </>
    ),
  },
  {
    name: "Word", dot: "#f3b4d6",
    art: (
      <>
        <Tile fill="#fff" />
        <path d="M32 20 H68 Q70 20 70 22 V32 H30 V22 Q30 20 32 20Z" fill="#5aa2e8" />
        <rect x="30" y="32" width="40" height="12" fill="#3f79cf" />
        <rect x="30" y="44" width="40" height="12" fill="#2759b8" />
        <path d="M30 56 H70 V66 Q70 68 68 68 H32 Q30 68 30 66Z" fill="#1e3f8e" />
        <rect x="18" y="30" width="27" height="27" rx="2" fill="#1f55b5" />
        <text x="31.500" y="50" textAnchor="middle" fontFamily={UI} fontWeight="600" fontSize="18" fill="#fff">W</text>
      </>
    ),
  },
];

const Missing = () => (
  <text x="47" y="79" textAnchor="middle" fontFamily={UI} fontWeight="300" fontSize="94" fill="#b7a4b6">?</text>
);

const files: DockItem[] = [
  { name: "Missing item 1", art: <Missing /> },
  { name: "Missing item 2", art: <Missing /> },
  {
    name: "Image document",
    art: (
      <>
        <path d="M22 0 H47 L64 18 H22Z" fill="#f1f1f1" />
        <path d="M44 0 L64 18 H52Z" fill="#cfcfcf" />
        <rect x="11" y="18" width="73" height="59" fill="#060503" stroke="#f5f5f5" strokeWidth="2.500" />
        <rect x="32" y="35" width="34" height="20" fill="#2b1f08" />
        <rect x="33" y="42" width="30" height="5" fill="#80601f" />
        <path d="M41 20 H50 L48 45 L50 75 H43 L44 45Z" fill="#94702a" />
      </>
    ),
  },
  {
    name: "Bin",
    art: (
      <>
        <defs><Grad id="biA" stops={["#6d7376", "#b3b8ba", "#63696c", "#8f9496"]} x2={1} y2={0} /></defs>
        <path d="M16 12 L24 77 Q26 83 47 83 Q68 83 70 77 L78 12Z" fill="url(#biA)" />
        <ellipse cx="47" cy="13" rx="31" ry="7" fill="#5f6467" stroke="#b0b5b7" strokeWidth="1.500" />
        <path d="M24 14 L22 5 L33 8 L38 1 L46 7 L56 2 L60 8 L70 4 L72 12 L64 19 L50 16 L42 21 L32 17Z" fill="#ecefee" />
        <path d="M38 10 L44 8 L46 16 L40 18Z" fill="#59c2c8" /><path d="M52 9 L60 12 L56 17Z" fill="#7a5a48" /><path d="M30 9 L34 13 L28 13Z" fill="#9aa0a2" />
      </>
    ),
  },
];

const DockGroup = ({ items }: { items: DockItem[] }) => (
  <>
    {items.map((it) => (
      <DockButton key={it.name} $dot={it.dot} aria-label={it.name}>
        <svg width="94" height="88" viewBox="0 0 94 88">{it.art}</svg>
      </DockButton>
    ))}
  </>
);

/* ---------- Page ---------- */

const menus = ["File", "Go", "View", "Labels", "Tracks", "Predict", "Help"];

const videos = [
  "/Users/nsirmpilatze/Data/PoseEstimation/Mouse-EPM/rawdata/sub-01_id-M708149/se",
  "/Users/nsirmpilatze/Data/PoseEstimation/Mouse-EPM/rawdata/sub-02_id-M708154/s",
];

const GREY = "#636166";

export default function App() {
  return (
    <>
      <GlobalStyle />
      <Desktop>
        <Wallpaper />
        <MenuBar>
          <Menus>
            <AppleButton aria-label="Apple menu"><FaApple size={36} /></AppleButton>
            <MenuButton $bold>python</MenuButton>
            {menus.map((m) => <MenuButton key={m}>{m}</MenuButton>)}
          </Menus>
          <StatusItems>
            {statusIcons.map((s) => (
              <StatusButton key={s.name} $w={s.w} aria-label={s.name}>{s.art}</StatusButton>
            ))}
            <Clock><span>Thu 9 Nov</span><span>16:46</span></Clock>
          </StatusItems>
        </MenuBar>

        <MainWindow>
          <TitleBar>
            <Lights>
              <Light $color={GREY} aria-label="Close" />
              <Light $color={GREY} aria-label="Minimise" />
              <Light $color={GREY} aria-label="Zoom window" />
            </Lights>
          </TitleBar>
          <WindowBody>
            <VideoSide>
              <VideoView>
                <Splash>
                  <SplashTop>
                    <LogoCard><SleapMark /></LogoCard>
                    <SplashText>
                      <h2>SLEAP</h2>
                      <p>Social LEAP</p>
                    </SplashText>
                  </SplashTop>
                  <Visit>Visit <b>sleap</b></Visit>
                </Splash>
              </VideoView>
              <Timeline>
                <Track>
                  <FrameNumbers><span>1</span><span>2</span></FrameNumbers>
                  <FrameSlider type="range" min={1} max={2} defaultValue={1} aria-label="Frame" />
                </Track>
              </Timeline>
            </VideoSide>

            <Panel>
              <PanelHeader>
                <HeaderButtons>
                  <RoundButton aria-label="Close panel">
                    <svg width="14" height="14" viewBox="0 0 14 14"><path d="M2 2 L12 12 M12 2 L2 12" stroke="#fff" strokeWidth="4.500" /></svg>
                  </RoundButton>
                  <RoundButton aria-label="Float panel">
                    <svg width="16" height="16" viewBox="0 0 16 16" fill="none" stroke="#fff" strokeWidth="2"><path d="M5 5 V1.500 H14.500 V10 H11" /><rect x="1.500" y="6" width="9" height="8.500" /></svg>
                  </RoundButton>
                </HeaderButtons>
                <h2>Skeleton</h2>
              </PanelHeader>
              <PanelContent>
                <Templates>
                  <Disclosure>
                    <svg width="20" height="34" viewBox="0 0 20 34"><path d="M3 3 L16 17 L3 31" fill="none" stroke="#e6e6e6" strokeWidth="5" strokeLinecap="round" strokeLinejoin="round" /></svg>
                    Templates
                  </Disclosure>
                  <hr />
                </Templates>
                <OuterGroup>
                  <NodeSegments>
                    <Segment>Nodes</Segment>
                    <Segment>Edges</Segment>
                  </NodeSegments>
                  <InnerGroup>
                    <TableFrame>
                      <NodeTable>
                        <thead><tr><th aria-label="Name" /><th>Symmetry</th></tr></thead>
                      </NodeTable>
                    </TableFrame>
                    <ButtonRow $top={47} $left={28} $right={25}>
                      <PushButton>New Node</PushButton>
                      <PushButton disabled>Delete Node</PushButton>
                    </ButtonRow>
                  </InnerGroup>
                  <ButtonRow $top={59} $left={31} $right={26}>
                    <PushButton>Load From File...</PushButton>
                    <PushButton>Save As...</PushButton>
                  </ButtonRow>
                </OuterGroup>
              </PanelContent>
              <BottomTabs>
                <TabEdge />
                <Segments>
                  <Segment>Videos</Segment>
                  <Segment>Skeleton</Segment>
                  <Segment>Labeling Suggestions</Segment>
                  <Segment $divided>Instances</Segment>
                </Segments>
                <TabEdge />
              </BottomTabs>
            </Panel>
          </WindowBody>
          <StatusBar />
        </MainWindow>

        <Dialog role="dialog" aria-labelledby="dialog-title">
          <TitleBar>
            <Lights>
              <Light $color="#ed6a5e" aria-label="Close" />
              <Light $color={GREY} aria-label="Minimise" />
              <Light $color="#61c554" aria-label="Zoom window" />
            </Lights>
            <h1 id="dialog-title">Video Import Options</h1>
          </TitleBar>
          <DialogBody>
            <ScrollArea>
              <ScrollContent>
                {videos.map((v) => (
                  <VideoGroup key={v}>
                    <CheckLabel><Check type="checkbox" defaultChecked />{v}</CheckLabel>
                    <GrayRow>
                      <CheckLabel><Check type="checkbox" />grayscale</CheckLabel>
                    </GrayRow>
                  </VideoGroup>
                ))}
              </ScrollContent>
              <ScrollTrack><ScrollThumb /></ScrollTrack>
            </ScrollArea>
            <DialogButtons>
              <PushButton>All grayscale</PushButton>
              <PushButton>All RGB</PushButton>
              <PushButton>Cancel</PushButton>
              <PushButton $primary>Import</PushButton>
            </DialogButtons>
          </DialogBody>
        </Dialog>

        <DockArea>
          <DockShelf aria-label="Dock">
            <DockGroup items={apps} />
            <DockRule />
            <DockGroup items={recent} />
            <DockRule />
            <DockGroup items={files} />
          </DockShelf>
        </DockArea>
      </Desktop>
    </>
  );
}
